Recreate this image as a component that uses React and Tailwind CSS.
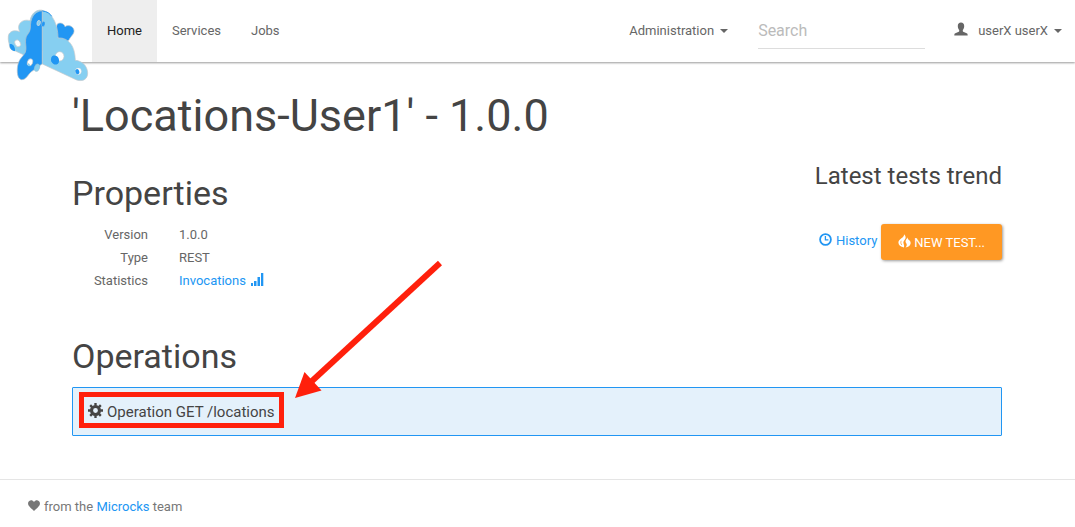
import React from "react";

function Logo() {
  return (
    <svg viewBox="0 0 276 252" className="absolute left-0 top-0 h-[84px] w-[92px]" aria-hidden="true">
      <path d="M172 72 C180 66 192 70 195 80 C204 73 219 78 222 90 C224 102 212 109 208 118 C204 127 193 127 186 122 L160 104Z" fill="#2196f3" stroke="#c4c9cc" strokeWidth="2" />
      <path d="M130 32 C117 26 95 34 90 62 C77 58 62 62 57 75 C54 83 57 90 59 95 C43 88 27 94 25 108 C23 123 29 132 29 142 C32 150 42 153 46 153 L100 178 L130 150Z" fill="#86cff1" stroke="#c4c9cc" strokeWidth="2" />
      <path d="M29 132 C37 130 46 138 45 153 C36 153 28 146 29 132Z" fill="#2196f3" />
      <ellipse cx="53" cy="130" rx="8" ry="11" transform="rotate(-30 53 130)" fill="#fff" stroke="#c4c9cc" strokeWidth="2" />
      <path d="M127 32 C101 34 91 55 91 85 C90 101 78 103 77 118 C75 131 81 145 76 157 C70 169 57 176 53 197 C50 215 52 236 64 239 C78 240 83 225 93 216 L127 191Z" fill="#2196f3" stroke="#b9c3c9" strokeWidth="2" />
      <path d="M127 32 C154 34 174 70 174 114 C204 112 225 135 226 181 C246 182 262 198 263 218 C264 237 249 246 230 240 L127 192Z" fill="#86cff1" stroke="#c4c9cc" strokeWidth="2" />
      <path d="M127 33 C140 34 150 40 155 49" fill="none" stroke="#2196f3" strokeWidth="3" />
      <ellipse cx="116" cy="69" rx="5" ry="8" transform="rotate(15 116 69)" fill="#86cff1" stroke="#d5dadd" strokeWidth="2" />
      <ellipse cx="130" cy="72" rx="5" ry="8" transform="rotate(15 130 72)" fill="#2196f3" stroke="#a8cfe4" strokeWidth="1" />
      <ellipse cx="90" cy="187" rx="8" ry="11" transform="rotate(20 90 187)" fill="#fff" stroke="#b9c3c9" strokeWidth="2" />
      <path d="M83 190 C86 188 91 192 90 198 L85 198Z" fill="#86cff1" />
      <ellipse cx="111" cy="203" rx="8" ry="12" transform="rotate(20 111 203)" fill="#86cff1" stroke="#9fb3bd" strokeWidth="1" />
      <ellipse cx="179" cy="169" rx="13" ry="14" fill="#fff" stroke="#c4c9cc" strokeWidth="2" />
      <ellipse cx="165" cy="180" rx="12" ry="14" transform="rotate(-20 165 180)" fill="#2196f3" />
      <ellipse cx="235" cy="214" rx="9" ry="10" fill="#fff" stroke="#c4c9cc" strokeWidth="1" />
      <ellipse cx="232" cy="215" rx="6" ry="8" transform="rotate(-20 232 215)" fill="#2196f3" />
    </svg>
  );
}

function Caret() {
  return (
    <svg viewBox="0 0 8 4" className="mt-[2px] h-1 w-2" fill="currentColor" aria-hidden="true">
      <path d="M0 0h8L4 4z" />
    </svg>
  );
}

function UserIcon() {
  return (
    <svg viewBox="0 0 14 14" className="-mt-[2px] size-[14px]" fill="currentColor" aria-hidden="true">
      <path d="M7 0.5C9 0.5 10.2 1.8 10.2 4C10.2 5.8 9.6 7.2 8.8 8V9C8.8 9.6 9.4 9.9 10.4 10.3L12.6 11.2C13.5 11.6 13.7 12.2 13.7 13.4H0.3C0.3 12.2 0.5 11.6 1.4 11.2L3.6 10.3C4.6 9.9 5.2 9.6 5.2 9V8C4.4 7.2 3.8 5.8 3.8 4C3.8 1.8 5 0.5 7 0.5Z" />
    </svg>
  );
}

function SignalIcon() {
  return (
    <svg viewBox="0 0 13 13" className="-mt-[2px] size-[13px]" fill="currentColor" aria-hidden="true">
      <path d="M0 10h2v3H0zM3 8h2.500v5H3zM6.500 4h2.500v9H6.500zM10 0h2.300v13H10z" />
    </svg>
  );
}

function ClockIcon() {
  return (
    <svg viewBox="0 0 13 13" className="-mt-[2px] size-[13px]" fill="none" stroke="currentColor" aria-hidden="true">
      <circle cx="6.5" cy="6.5" r="5.4" strokeWidth="1.8" />
      <path d="M6.400 3V6.900H9.400" strokeWidth="1.300" />
    </svg>
  );
}

function FireIcon() {
  return (
    <svg viewBox="0 0 13 14" className="-mt-[2px] h-[14px] w-[13px]" fill="currentColor" aria-hidden="true">
      <path d="M6 0.200C8.200 2.300 8 4 6.700 5.700C5.600 7.200 5 8.400 5.700 9.900C6.200 10.900 6.300 12.200 6 13.500C2.600 13.100 0.400 11.300 0.400 8.600C0.400 6.600 1.700 5.500 3.400 4.200C5 3 6.300 2.200 6 0.200Z" />
      <path d="M9.600 3.200C9.500 4.800 10.300 5.300 11.300 6.200C12.400 7.200 12.800 8.200 12.600 9.600C12.300 11.700 10.200 13.300 7.500 13.600C8.800 12.400 9.100 11.100 8.400 9.600C7.700 8.200 7.200 7.500 7.800 6.200C8.200 5.200 9.200 4.500 9.600 3.200Z" />
      <path d="M3.200 6.800C2.500 8.300 2.700 9.700 3.800 11" fill="none" stroke="#ff9823" strokeWidth="0.700" />
    </svg>
  );
}

function CogIcon() {
  return (
    <svg viewBox="-7 -7 14 14" className="-mt-[3px] size-[15px]" fill="none" stroke="currentColor" aria-hidden="true">
      <circle r="3.700" strokeWidth="2.900" />
      <path d="M0-7V-4.500M0 4.500V7M-7 0H-4.500M4.500 0H7M-4.950-4.950L-3.200-3.200M3.200 3.200L4.950 4.950M-4.950 4.950L-3.200 3.200M3.200-3.200L4.950-4.950" strokeWidth="2.200" />
    </svg>
  );
}

function HeartIcon() {
  return (
    <svg viewBox="0 0 12 11" className="-mt-[2px] h-[11px] w-3" fill="currentColor" aria-hidden="true">
      <path d="M6 2.100C7.100 0.200 9.300-0.200 10.700 0.900C12.200 2 12.300 4.100 11.200 5.700C10 7.500 7.700 9 6 11C4.300 9 2 7.500 0.800 5.700C-0.300 4.100-0.200 2 1.300 0.900C2.700-0.200 4.900 0.200 6 2.100Z" />
    </svg>
  );
}

function Header() {
  return (
    <header className="relative flex h-[62px] items-stretch bg-white pl-[92px] pr-[13px] shadow-[0_1px_2px_rgba(0,0,0,0.4)]">
      <a href="#home" aria-label="Microcks">
        <Logo />
      </a>
      <nav className="flex">
        <a href="#home" className="flex items-center bg-[#eeeeee] px-[15px] pb-[2px] text-[#212121]">Home</a>
        <a href="#services" className="flex items-center px-[15px] pb-[2px]">Services</a>
        <a href="#jobs" className="flex items-center px-[15px] pb-[2px]">Jobs</a>
      </nav>
      <div className="ml-auto flex items-center pb-[2px]">
        <button type="button" className="flex items-center gap-[6px]">
          Administration
          <Caret />
        </button>
        <input
          type="text"
          aria-label="Search"
          placeholder="Search"
          className="ml-[30px] mt-[1px] h-[37px] w-[167px] border-b border-[#dddddd] text-[16px] outline-none placeholder:text-[#bbbbbb]"
        />
        <button type="button" className="ml-[29px] flex items-center">
          <UserIcon />
          <span className="ml-[10px] mr-[6px]">userX userX</span>
          <Caret />
        </button>
      </div>
    </header>
  );
}

function Property({ name, children }) {
  return (
    <>
      <dt className="text-right">{name}</dt>
      <dd>{children}</dd>
    </>
  );
}

export default function App() {
  return (
    <div className="bg-white font-[Roboto,sans-serif] text-[13px] leading-[23px] text-[#666666]">
      <Header />
      <main className="pb-[43px] pl-[72px] pr-[73px] pt-[29px]">
        <h1 className="text-[45px] leading-[50px] text-[#444444]">'Locations-User1' - 1.0.0</h1>
        <div className="flex justify-between pt-[22px]">
          <section className="pt-[12px]">
            <h2 className="text-[34px] leading-[37px] text-[#444444]">Properties</h2>
            <dl className="mt-[11px] grid grid-cols-[76px_auto] gap-x-[31px]">
              <Property name="Version">1.0.0</Property>
              <Property name="Type">REST</Property>
              <Property name="Statistics">
                <a href="#invocations" className="flex items-center gap-[5px] text-[#2196f3]">
                  Invocations
                  <SignalIcon />
                </a>
              </Property>
            </dl>
          </section>
          <section className="flex flex-col items-end">
            <h3 className="text-[24px] leading-[26px] text-[#444444]">Latest tests trend</h3>
            <div className="mt-[35px] flex items-center gap-1">
              <a href="#history" className="-mt-[3px] flex items-center gap-[4px] text-[#2196f3]">
                <ClockIcon />
                History
              </a>
              <button type="button" className="flex h-[36px] items-center gap-[3px] rounded-[3px] bg-[#ff9823] px-[17px] text-white shadow-[1px_1px_3px_rgba(0,0,0,0.4)]">
                <FireIcon />
                NEW TEST...
              </button>
            </div>
          </section>
        </div>
        <section className="pt-[46px]">
          <h2 className="text-[34px] leading-[37px] text-[#444444]">Operations</h2>
          <div className="relative mt-[12px] flex h-[49px] items-start rounded-[1px] border border-[#2196f3] bg-[#e4f1fb] pl-[6px] pt-[4px]">
            <a href="#operation" className="flex h-[36px] items-center gap-[4px] border-[5px] border-[#ff200c] pl-1 pr-[4px] pt-[4px] text-[15px] text-[#444444]">
              <CogIcon />
              Operation GET /locations
            </a>
            <svg viewBox="0 0 148 140" className="absolute -top-[128px] left-[221px] h-[140px] w-[148px]" aria-hidden="true">
              <path d="M146 3L18 121" stroke="#ff200c" strokeWidth="6" />
              <path d="M1 138L10.500 112L27.500 130.500Z" fill="#ff200c" />
            </svg>
          </div>
        </section>
      </main>
      <footer className="flex items-center gap-1 border-t border-[#e5e5e5] px-7 py-[15px] text-[#777777]">
        <HeartIcon />
        <p>
          from the <a href="#microcks" className="text-[#2196f3]">Microcks</a> team
        </p>
      </footer>
    </div>
  );
}
